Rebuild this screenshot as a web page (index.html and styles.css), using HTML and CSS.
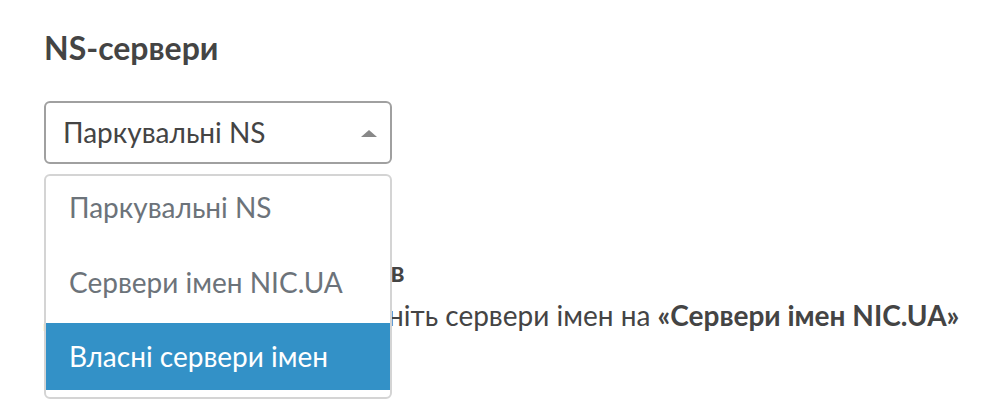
FILE: index.html
```html
<!DOCTYPE html>
<html lang="uk">
<head>
<meta charset="utf-8">
<link rel="stylesheet" href="styles.css">
</head>
<body>
<div class="page">
  <h2 class="title">NS-сервери</h2>
  <div class="field">
    <div class="select">
      <span class="select-value">Паркувальні NS</span>
      <span class="caret"></span>
    </div>
    <ul class="menu">
      <li class="option">Паркувальні NS</li>
      <li class="option">Сервери імен NIC.UA</li>
      <li class="option active">Власні сервери імен</li>
    </ul>
  </div>
  <p class="info">
    <strong>Немає власних NS-серверів</strong><br>
    Для підключення DNS, змініть сервери імен на <strong>«Сервери імен NIC.UA»</strong>
  </p>
</div>
</body>
</html>
```
FILE: styles.css
```css
* { box-sizing: border-box; }
html, body { margin: 0; padding: 0; background: #fff; }
body {
  font-family: Lato, "Noto Sans", sans-serif;
  color: #444;
}
.page {
  padding: 29px 44px 0;
  min-height: 406px;
}
.title {
  margin: 0;
  font-size: 32px;
  line-height: 1.2;
  font-weight: 700;
  color: #444;
}
.field {
  position: relative;
  width: 348px;
  margin-top: 34px;
}
.select {
  height: 63px;
  border: 2px solid #a0a0a0;
  border-radius: 6px;
  display: flex;
  align-items: center;
  justify-content: space-between;
  padding: 0 13px 0 17px;
  font-size: 28px;
  color: #444;
}
.select-value { margin-top: -2px; }
.caret {
  width: 0;
  height: 0;
  border-left: 8px solid transparent;
  border-right: 8px solid transparent;
  border-bottom: 7px solid #888;
  margin-top: 2px;
}
.menu {
  position: absolute;
  left: 0;
  top: 73px;
  width: 348px;
  height: 225px;
  margin: 0;
  padding: 0;
  list-style: none;
  background: #fff;
  border: 2px solid #d4d4d4;
  border-radius: 6px;
  display: flex;
  flex-direction: column;
  gap: 7.5px;
  overflow: hidden;
  z-index: 2;
}
.option {
  height: 67px;
  flex: none;
  display: flex;
  align-items: center;
  padding-left: 23px;
  font-size: 28px;
  color: #6c737a;
  white-space: nowrap;
}
.option:first-child { margin-top: -2.5px; }
.option.active {
  background: #3391c7;
  color: #fff;
}
.info {
  margin: 86px 0 0;
  font-size: 28px;
  line-height: 43.7px;
  color: #444;
  white-space: nowrap;
}
.info strong { font-weight: 700; }
```
